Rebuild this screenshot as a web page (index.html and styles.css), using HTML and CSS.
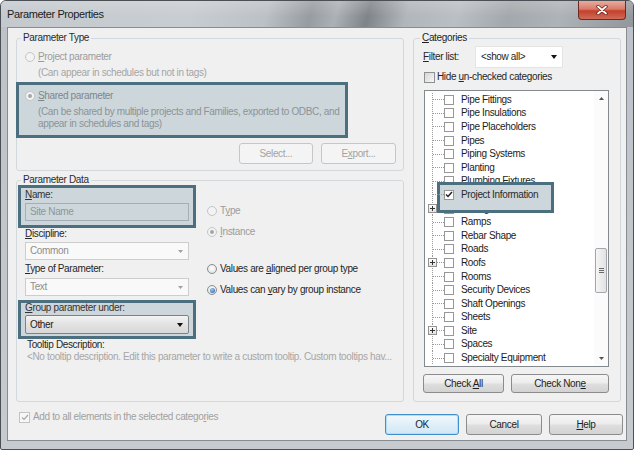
FILE: index.html
```html
<!DOCTYPE html>
<html>
<head>
<meta charset="utf-8">
<title>Parameter Properties</title>
<link rel="stylesheet" href="styles.css">
</head>
<body>
<div class="window">
  <div class="titlebar">
    <span class="title">Parameter Properties</span>
    <span class="close"><svg width="12" height="10" viewBox="0 0 12 10"><path d="M2 1.5L10 8.5M10 1.5L2 8.5" stroke="#6a2018" stroke-width="3.4" stroke-linecap="round"/><path d="M2 1.5L10 8.5M10 1.5L2 8.5" stroke="#fff" stroke-width="1.8" stroke-linecap="round"/></svg></span>
  </div>
  <div class="client">
    <div class="main">
      <div class="leftcol">
        <fieldset class="group g-type">
          <legend>Parameter Type</legend>
          <div class="opt dim"><span class="radio dis"></span><span><u>P</u>roject parameter</span></div>
          <div class="desc">(Can appear in schedules but not in tags)</div>
          <div class="hl hl-shared">
            <div class="opt shared"><span class="radio dis on"></span><span><u>S</u>hared parameter</span></div>
            <div class="desc2">(Can be shared by multiple projects and Families, exported to ODBC, and<br>appear in schedules and tags)</div>
          </div>
          <div class="btnrow">
            <span class="btn dis b-select"><span>Select...</span></span>
            <span class="btn dis b-export"><span>E<u>x</u>port...</span></span>
          </div>
        </fieldset>
        <fieldset class="group g-data">
          <legend>Parameter Data</legend>
          <div class="datarow">
            <div class="dcol">
              <div class="hl hl-name">
                <div class="lbl"><u>N</u>ame:</div>
                <div class="input">Site Name</div>
              </div>
              <div class="lbl pad"><u>D</u>iscipline:</div>
              <div class="select dis s-disc"><span>Common</span><svg width="5" height="3" viewBox="0 0 5 3"><path d="M0 0H5L2.5 3Z" fill="#a0a0a0"/></svg></div>
              <div class="lbl pad l-top"><u>T</u>ype of Parameter:</div>
              <div class="select dis s-type"><span>Text</span><svg width="5" height="3" viewBox="0 0 5 3"><path d="M0 0H5L2.5 3Z" fill="#a0a0a0"/></svg></div>
              <div class="hl hl-group">
                <div class="lbl l-grp"><u>G</u>roup parameter under:</div>
                <div class="select on"><span>Other</span><svg width="6" height="4" viewBox="0 0 6 4"><path d="M0 0H6L3 4Z" fill="#111"/></svg></div>
              </div>
            </div>
            <div class="rcol">
              <div class="opt dim"><span class="radio dis"></span><span>T<u>y</u>pe</span></div>
              <div class="opt dim r2"><span class="radio dis on"></span><span><u>I</u>nstance</span></div>
              <div class="opt r3"><span class="radio"></span><span>Values are <u>a</u>ligned per group type</span></div>
              <div class="opt r4"><span class="radio on blue"></span><span>Values can <u>v</u>ary by group instance</span></div>
            </div>
          </div>
          <div class="tip-lbl">Tooltip Description:</div>
          <div class="tip-text">&lt;No tooltip description. Edit this parameter to write a custom tooltip. Custom tooltips hav...</div>
        </fieldset>
      </div>
      <fieldset class="group g-cat">
        <legend><u>C</u>ategories</legend>
        <div class="filter">
          <span class="fl"><u>F</u>ilter list:</span>
          <span class="combo"><span>&lt;show all&gt;</span><svg width="6" height="4" viewBox="0 0 6 4"><path d="M0 0H6L3 4Z" fill="#111"/></svg></span>
        </div>
        <div class="hide"><span class="cb"></span><span>Hide <u>u</u>n-checked categories</span></div>
        <div class="list">
          <div class="tree">
            <div class="row"><span class="gut"></span><span class="cb"></span><span>Pipe Fittings</span></div>
            <div class="row"><span class="gut"></span><span class="cb"></span><span>Pipe Insulations</span></div>
            <div class="row"><span class="gut"></span><span class="cb"></span><span>Pipe Placeholders</span></div>
            <div class="row"><span class="gut"></span><span class="cb"></span><span>Pipes</span></div>
            <div class="row"><span class="gut"></span><span class="cb"></span><span>Piping Systems</span></div>
            <div class="row"><span class="gut"></span><span class="cb"></span><span>Planting</span></div>
            <div class="row"><span class="gut"></span><span class="cb"></span><span>Plumbing Fixtures</span></div>
            <div class="row sel"><span class="gut"></span><span class="cb"><svg width="8" height="7" viewBox="0 0 8 7"><path d="M1 3.5L3 5.5L7 1" fill="none" stroke="#222" stroke-width="1.5"/></svg></span><span>Project Information</span></div>
            <div class="row"><span class="gut"><span class="plus"><svg width="7" height="7" viewBox="0 0 7 7"><path d="M1 3.5H6M3.5 1V6" stroke="#333" stroke-width="1"/></svg></span></span><span class="cb"></span><span>Railings</span></div>
            <div class="row"><span class="gut"></span><span class="cb"></span><span>Ramps</span></div>
            <div class="row"><span class="gut"></span><span class="cb"></span><span>Rebar Shape</span></div>
            <div class="row"><span class="gut"></span><span class="cb"></span><span>Roads</span></div>
            <div class="row"><span class="gut"><span class="plus"><svg width="7" height="7" viewBox="0 0 7 7"><path d="M1 3.5H6M3.5 1V6" stroke="#333" stroke-width="1"/></svg></span></span><span class="cb"></span><span>Roofs</span></div>
            <div class="row"><span class="gut"></span><span class="cb"></span><span>Rooms</span></div>
            <div class="row"><span class="gut"></span><span class="cb"></span><span>Security Devices</span></div>
            <div class="row"><span class="gut"></span><span class="cb"></span><span>Shaft Openings</span></div>
            <div class="row"><span class="gut"></span><span class="cb"></span><span>Sheets</span></div>
            <div class="row"><span class="gut"><span class="plus"><svg width="7" height="7" viewBox="0 0 7 7"><path d="M1 3.5H6M3.5 1V6" stroke="#333" stroke-width="1"/></svg></span></span><span class="cb"></span><span>Site</span></div>
            <div class="row"><span class="gut"></span><span class="cb"></span><span>Spaces</span></div>
            <div class="row"><span class="gut"></span><span class="cb"></span><span>Specialty Equipment</span></div>
          </div>
          <div class="scroll">
            <div class="sarrow"><svg width="5" height="3" viewBox="0 0 5 3"><path d="M0 3H5L2.5 0Z" fill="#555"/></svg></div>
            <div class="track"><div class="thumb"><svg width="5" height="5" viewBox="0 0 5 5"><path d="M0 0.5H5M0 2.5H5M0 4.5H5" stroke="#6a6a6a" stroke-width="1"/></svg></div></div>
            <div class="sarrow"><svg width="5" height="3" viewBox="0 0 5 3"><path d="M0 0H5L2.5 3Z" fill="#555"/></svg></div>
          </div>
        </div>
        <div class="catbtns">
          <span class="btn b-all"><span>Check <u>A</u>ll</span></span>
          <span class="btn b-none"><span>Check Non<u>e</u></span></span>
        </div>
      </fieldset>
    </div>
    <div class="footer">
      <div class="addall"><span class="cb"><svg width="8" height="7" viewBox="0 0 8 7"><path d="M1 3.5L3 5.5L7 1" fill="none" stroke="#a8a8a8" stroke-width="1.2"/></svg></span><span>Add to all elements in the selected catego<u>r</u>ies</span></div>
      <div class="footbtns">
        <span class="btn b-ok"><span>OK</span></span>
        <span class="btn b-cancel"><span>Cancel</span></span>
        <span class="btn b-help"><span><u>H</u>elp</span></span>
      </div>
    </div>
  </div>
</div>
</body>
</html>
```

FILE: styles.css
```css
* { box-sizing: border-box; }
html, body { margin: 0; padding: 0; }
body {
  width: 634px; height: 450px; overflow: hidden; background: #fff;
  font-family: "Liberation Sans", Arial, sans-serif; font-size: 10px;
  letter-spacing: -0.35px; line-height: 12px; color: #262626;
}
u { text-decoration: underline; text-underline-offset: 1px; }

.window {
  width: 634px; height: 450px;
  border: 1px solid #4a5056; border-radius: 6px 6px 2px 2px;
  background: linear-gradient(#bcc2c8, #c7cbcf);
  display: flex; flex-direction: column; overflow: hidden;
}
.titlebar {
  flex: none; height: 26px; display: flex; align-items: flex-start;
  background:
    linear-gradient(180deg, rgba(255,255,255,0.18), rgba(255,255,255,0) 60%),
    linear-gradient(105deg, #c4c9ce 0%, #c8cdd1 30%, #bcc1c6 42%, #979ca1 49%, #acb1b5 53%, #7f8489 58%, #b1b6ba 64%, #babfc3 72%, #a3a8ac 80%, #aeb3b7 88%, #92979c 100%);
}
.title { align-self: center; margin-left: 6px; font-size: 11px; letter-spacing: -0.4px; color: #1c1c1c; white-space: nowrap; }
.close {
  margin-left: auto; margin-right: 7px; width: 48px; height: 19px;
  border: 1px solid #6e2a20; border-top: 0; border-radius: 0 0 4px 4px;
  background: linear-gradient(#e8ab9e 0%, #d97b69 45%, #c4402c 55%, #d06b57 100%);
  display: flex; align-items: center; justify-content: center;
}

.client {
  flex: none; margin-left: 6px; width: 620px; height: 414px;
  border: 1px solid #868c92; background: #f0f0f0;
  padding: 4px 5px 0 8px;
}
.main { display: flex; align-items: flex-start; gap: 9px; }
.leftcol { width: 388px; flex: none; }

.group { margin: 0; border: 1px solid #d3d8dc; border-radius: 3px; min-width: 0; }
.group legend { padding: 0 2px; line-height: 12px; height: 12px; color: #2b2b2b; white-space: nowrap; }

/* Parameter Type */
.g-type { padding: 6px 7px 6px 8px; }
.g-type legend { margin-left: -4px; }
.opt { display: flex; align-items: center; height: 14px; white-space: nowrap; }
.radio {
  width: 10px; height: 10px; flex: none; margin-right: 3px; border-radius: 50%;
  border: 1px solid #8a8c8e; background: radial-gradient(circle at 50% 40%, #fff, #d9d9d9);
  display: flex; align-items: center; justify-content: center;
}
.radio.dis { border-color: #c3c6c8; background: #f3f3f3; }
.radio.on::after { content: ""; width: 4px; height: 4px; border-radius: 50%; background: #a2a7aa; }
.radio.blue::after { width: 5px; height: 5px; background: radial-gradient(circle at 40% 35%, #9ccdf2, #1d579a); }
.dim { color: #9c9c9c; }
.desc { margin-top: 2px; height: 14px; line-height: 14px; padding-left: 13px; color: #a5a5a5; white-space: nowrap; }
.hl { border: 3px solid #4b6f7e; background: #cdd6da; }
.hl-shared { margin: 2px 0 0 -9px; width: 332px; padding: 4px 0 5px 6px; }
.shared { color: #7c878c; }
.desc2 { margin-top: 3px; padding-left: 13px; line-height: 12px; color: #8a9498; white-space: nowrap; }
.btnrow { display: flex; justify-content: flex-end; gap: 8px; margin-top: 5px; }

.btn {
  display: flex; align-items: center; justify-content: center; height: 21px;
  border: 1px solid #8c8c8c; border-radius: 3px; white-space: nowrap; color: #1e1e1e;
  background: linear-gradient(#f6f6f6 0%, #ececec 48%, #dfdfdf 52%, #d2d2d2 100%);
}
.btn.dis { border-color: #c4c7ca; background: #f4f4f4; color: #a3a3a3; }
.b-select { width: 74px; }
.b-export { width: 75px; }

/* Parameter Data */
.g-data { margin-top: 3px; padding: 0 0 12px 1px; }
.g-data legend { margin-left: 3px; }
.datarow { display: flex; align-items: flex-start; }
.dcol { width: 178px; flex: none; }
.lbl { height: 12px; line-height: 12px; white-space: nowrap; color: #262626; }
.pad { padding: 0 7px; }
.hl-name { margin-top: -1px; padding: 0 4px 4px; }
.hl-name .lbl { height: 14px; line-height: 14px; color: #333; }
.input {
  margin-top: 1px; height: 18px; border: 1px solid #a5afb4; padding-left: 4px;
  display: flex; align-items: center; color: #8c979b;
}
.select {
  display: flex; align-items: center; height: 18px; padding: 0 5px 0 4px;
  border: 1px solid #cdcdcd; background: #f9f9f9; color: #8e8e8e; white-space: nowrap;
}
.select svg { margin-left: auto; }
.s-disc { margin: 2px 7px 0; }
.l-top { margin-top: 3px; }
.s-type { margin: 3px 7px 0; }
.hl-group { margin-top: 4px; padding: 0 4px 2px; }
.l-grp { height: 10px; line-height: 10px; color: #333; }
.select.on {
  margin-top: 2px; height: 19px; border-color: #7d8286; border-radius: 2px; color: #1a1a1a;
  background: linear-gradient(#f3f3f3, #e2e2e2 50%, #d8d8d8);
}
.rcol { margin-left: 11px; padding-top: 18px; }
.r2 { margin-top: 7px; }
.r3 { margin-top: 23px; }
.r4 { margin-top: 7px; }
.tip-lbl { padding-left: 9px; height: 12px; line-height: 12px; color: #262626; white-space: nowrap; }
.tip-text { padding-left: 9px; min-height: 38px; color: #a6a6a6; white-space: nowrap; overflow: hidden; }

/* Categories */
.g-cat { width: 208px; flex: none; padding: 0 11px 8px 9px; }
.g-cat legend { margin-left: -3px; color: #1e1e1e; }
.filter { display: flex; align-items: center; margin-top: 2px; height: 22px; white-space: nowrap; }
.fl { width: 52px; flex: none; }
.combo {
  width: 88px; height: 22px; border: 1px solid #e4e4e4; background: #fff;
  display: flex; align-items: center; padding: 0 5px; color: #1e1e1e;
}
.combo svg { margin-left: auto; }
.hide { display: flex; align-items: center; margin: 2px 0 0 1px; height: 14px; white-space: nowrap; }
.cb {
  width: 11px; height: 11px; flex: none; border: 1px solid #8e8f8f; background: #fff;
  display: flex; align-items: center; justify-content: center;
}
.hide .cb { background: linear-gradient(135deg, #d6d6d6, #f6f6f6); margin-right: 2px; }
.list { margin: 6px 0 0 1px; height: 277px; border: 1px solid #84898e; background: #fff; display: flex; }
.tree { flex: 1; min-width: 0; padding-top: 2px; overflow: hidden; }
.row { height: 13.6px; display: flex; align-items: center; white-space: nowrap; color: #1c1c1c; }
.gut {
  width: 19px; height: 100%; flex: none; display: flex; align-items: center; padding-left: 3px;
  background-image:
    repeating-linear-gradient(to bottom, #9a9a9a 0 1px, transparent 1px 2px),
    repeating-linear-gradient(to right, #9a9a9a 0 1px, transparent 1px 2px);
  background-size: 1px 100%, 11px 1px;
  background-position: 7px 0, 8px 50%;
  background-repeat: no-repeat;
}
.row .cb { width: 10px; height: 10px; border-color: #979797; margin-right: 7px; }
.plus {
  width: 9px; height: 9px; border: 1px solid #929292; background: linear-gradient(#fff, #e2e2e2);
  display: flex; align-items: center; justify-content: center;
}
.row.sel { position: relative; z-index: 1; color: #2a2a2a; }
.row.sel::before {
  content: ""; position: absolute; left: 12px; top: -6px; width: 111px; height: 25px;
  border: 3px solid #4b6f7e; background: #cdd6da; z-index: -1;
}
.scroll { width: 14px; flex: none; display: flex; flex-direction: column; background: #fbfbfb; }
.sarrow { height: 15px; display: flex; align-items: center; justify-content: center; }
.track { flex: 1; padding-top: 142px; }
.thumb {
  height: 45px; margin: 0 1px; border: 1px solid #a3a7ab; border-radius: 2px;
  background: linear-gradient(to right, #f5f5f5, #e2e2e2);
  display: flex; align-items: center; justify-content: center;
}
.catbtns { display: flex; gap: 7px; margin-top: 7px; }
.b-all { width: 81px; height: 19px; }
.b-none { width: 98px; height: 19px; }

/* Footer */
.footer { display: flex; align-items: flex-start; margin: 0 -2px 0 3px; }
.addall { display: flex; align-items: center; margin-top: 9px; height: 12px; color: #a0a0a0; white-space: nowrap; }
.addall .cb { border-color: #c3c3c3; background: #f7f7f7; margin-right: 3px; }
.footbtns { margin-left: auto; margin-top: 12px; display: flex; gap: 7px; }
.b-ok {
  width: 74px; border-color: #3f8fcb;
  background: linear-gradient(#f1f8fd, #e0eff9 50%, #d1e7f6);
  box-shadow: inset 0 0 0 1px #b4ddf6;
}
.b-cancel { width: 76px; }
.b-help { width: 74px; }
```
